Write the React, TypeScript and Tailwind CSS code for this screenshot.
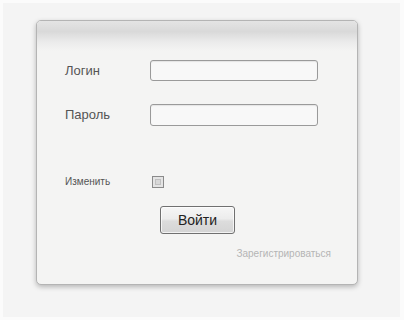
import React from "react";

export default function App() {
  return (
    <div className="w-[404px] h-[320px] bg-[#f4f4f4] border-t-[3px] border-l-[3px] border-b-[3px] border-r-[4px] border-[#fbfbfb] pt-[17px] pl-[33px]" style={{ fontFamily: '"Liberation Sans", Arial, sans-serif' }}>
      <div className="w-[322px] h-[265px] rounded-[5px] border border-[#b4b4b4] bg-[#f4f4f3] shadow-[0_2px_5px_rgba(0,0,0,0.25)] overflow-hidden flex flex-col">
        <div className="h-[30px] shrink-0 bg-[linear-gradient(to_bottom,#e4e4e4_0%,#d9d9d9_35%,#ebebeb_70%,#f4f4f3_100%)]" />
        <div className="flex items-center h-[21px] mt-[9px]">
          <span className="w-[113px] shrink-0 pl-[28px] text-[13px] text-[#555]">Логин</span>
          <div className="w-[168px] h-[21px] rounded-[3px] border border-[#9a9a9a] bg-[#f8f8f8] shadow-[inset_0_1px_1px_rgba(0,0,0,0.08)]" />
        </div>
        <div className="flex items-center h-[22px] mt-[23px]">
          <span className="w-[113px] shrink-0 pl-[28px] text-[13px] text-[#555]">Пароль</span>
          <div className="w-[168px] h-[22px] rounded-[3px] border border-[#9a9a9a] bg-[#f8f8f8] shadow-[inset_0_1px_1px_rgba(0,0,0,0.08)]" />
        </div>
        <div className="flex items-center h-[13px] mt-[49px]">
          <span className="w-[115px] shrink-0 pl-[28px] text-[10px] text-[#555]">Изменить</span>
          <div className="w-[12px] h-[12px] border border-[#8a8a8a] bg-[#e4e4e4] p-[2px]">
            <div className="w-full h-full border border-[#c0c0c0] bg-[#d8d8d8]" />
          </div>
        </div>
        <div className="flex mt-[18px] pl-[123px]">
          <div className="w-[75px] h-[28px] rounded-[3px] border border-[#707070] bg-[linear-gradient(to_bottom,#f6f6f6_0%,#ececec_45%,#dcdcdc_55%,#d4d4d4_100%)] flex items-center justify-center text-[14px] text-[#222] shadow-[inset_0_0_0_1px_rgba(255,255,255,0.7)]">
            Войти
          </div>
        </div>
        <div className="flex justify-end pr-[26px] mt-[12px]">
          <span className="text-[10px] text-[#b5b5b5]">Зарегистрироваться</span>
        </div>
      </div>
    </div>
  );
}
